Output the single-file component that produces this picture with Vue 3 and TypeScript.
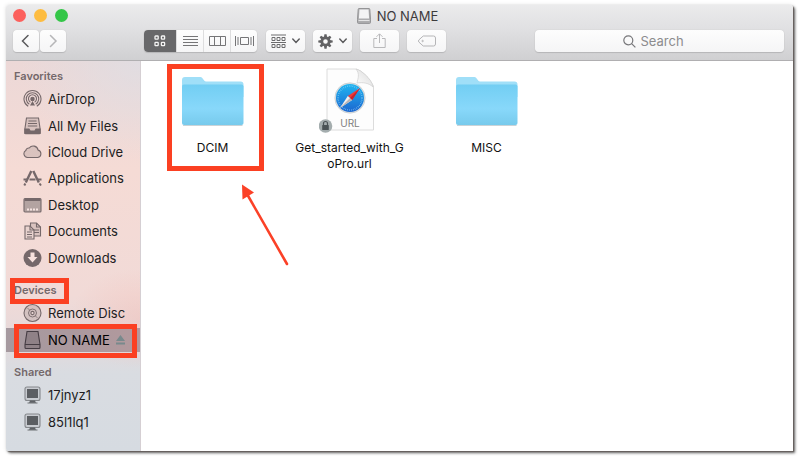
<script setup lang="ts">
import { ref } from 'vue'

interface Place { name: string; icon: string; ejectable?: boolean }
interface Section { title: string; marked?: boolean; places: Place[] }
interface FileItem { lines: string[]; kind: 'folder' | 'url'; marked?: boolean }

const sections: Section[] = [
  {
    title: 'Favorites',
    places: [
      { name: 'AirDrop', icon: 'airdrop' },
      { name: 'All My Files', icon: 'files' },
      { name: 'iCloud Drive', icon: 'cloud' },
      { name: 'Applications', icon: 'apps' },
      { name: 'Desktop', icon: 'desktop' },
      { name: 'Documents', icon: 'documents' },
      { name: 'Downloads', icon: 'downloads' },
    ],
  },
  {
    title: 'Devices',
    marked: true,
    places: [
      { name: 'Remote Disc', icon: 'disc' },
      { name: 'NO NAME', icon: 'drive', ejectable: true },
    ],
  },
  {
    title: 'Shared',
    places: [
      { name: '17jnyz1', icon: 'display' },
      { name: '85l1lq1', icon: 'display' },
    ],
  },
]

const files: FileItem[] = [
  { lines: ['DCIM'], kind: 'folder', marked: true },
  { lines: ['Get_started_with_G', 'oPro.url'], kind: 'url' },
  { lines: ['MISC'], kind: 'folder' },
]

const selected = ref('NO NAME')
const view = ref('icons')
const query = ref('')
const toothAngles = [0, 45, 90, 135, 180, 225, 270, 315]
</script>

<template>
  <div class="page">
    <main class="window">
      <header class="header">
        <div class="titlebar">
          <div class="lights">
            <button class="light red" aria-label="Close"></button>
            <button class="light yellow" aria-label="Minimize"></button>
            <button class="light green" aria-label="Zoom"></button>
          </div>
          <h1 class="title">
            <svg width="14" height="16" viewBox="0 0 14 16">
              <path d="M2 .5h10q.7 0 .8.8l.7 9.900v3.200a1 1 0 0 1-1 1h-11a1 1 0 0 1-1-1v-3.200l.7-9.900q.1-.8.8-.8z" fill="#adadaf" stroke="#949496" />
              <path d="M2.500 1.500h9l.6 9H1.900z" fill="#f4f4f5" />
              <path d="M1.500 12.500h11" stroke="#e4e4e5" />
            </svg>
            NO NAME
          </h1>
          <div></div>
        </div>
        <div class="toolbar">
          <div class="nav">
            <button class="btn" aria-label="Back">
              <svg width="10" height="14" viewBox="0 0 10 14"><path d="M7 1.500 1.500 7 7 12.500" class="line dark" /></svg>
            </button>
            <button class="btn" aria-label="Forward">
              <svg width="10" height="14" viewBox="0 0 10 14"><path d="M2.500 1.500 8 7l-5.500 5.500" class="line pale" /></svg>
            </button>
          </div>
          <div class="views">
            <button class="first" :class="{ on: view === 'icons' }" aria-label="Icons" @click="view = 'icons'">
              <svg width="12" height="12" viewBox="0 0 12 12" fill="none" stroke="currentColor" stroke-width="1.300">
                <rect x="1" y="1" width="3.200" height="3.200" rx=".6" /><rect x="7.400" y="1" width="3.200" height="3.200" rx=".6" />
                <rect x="1" y="7.400" width="3.200" height="3.200" rx=".6" /><rect x="7.400" y="7.400" width="3.200" height="3.200" rx=".6" />
              </svg>
            </button>
            <button :class="{ on: view === 'list' }" aria-label="List" @click="view = 'list'">
              <svg width="15" height="12" viewBox="0 0 15 12" stroke="currentColor"><path d="M0 1.500h15M0 4.500h15M0 7.500h15M0 10.500h15" /></svg>
            </button>
            <button :class="{ on: view === 'columns' }" aria-label="Columns" @click="view = 'columns'">
              <svg width="17" height="12" viewBox="0 0 17 12" fill="none" stroke="currentColor"><path d="M.5 1.500h16v9H.5zM5.500 1.500v9M11.500 1.500v9" /></svg>
            </button>
            <button :class="{ on: view === 'flow' }" aria-label="Cover Flow" @click="view = 'flow'">
              <svg width="19" height="12" viewBox="0 0 19 12" fill="none" stroke="currentColor"><path d="M5.500 2.500h8v7h-8zM.5 1v10M3 2v8M16 2v8M18.500 1v10" /></svg>
            </button>
          </div>
          <button class="btn wide" aria-label="Arrange">
            <svg width="15" height="15" viewBox="0 0 15 15" fill="none" stroke="#6c6c6e">
              <path d="M0 1h15M0 8.500h15" />
              <path d="M1 3.500h3v3H1zM6 3.500h3v3H6zM11 3.500h3v3h-3zM1 10.500h3v3H1zM6 10.500h3v3H6zM11 10.500h3v3h-3z" />
            </svg>
            <svg width="8" height="6" viewBox="0 0 8 6"><path d="M.8 1 4 4.400 7.200 1" class="line dark" /></svg>
          </button>
          <button class="btn wide" aria-label="Action">
            <svg width="15" height="15" viewBox="-7.500 -7.500 15 15" fill="#626264">
              <path v-for="a in toothAngles" :key="a" d="M-1.600-4-1.100-7.200h2.200L1.600-4z" :transform="`rotate(${a})`" />
              <circle r="3.700" fill="none" stroke="#626264" stroke-width="2.800" />
            </svg>
            <svg width="8" height="6" viewBox="0 0 8 6"><path d="M.8 1 4 4.400 7.200 1" class="line dark" /></svg>
          </button>
          <button class="btn wide" aria-label="Share">
            <svg width="13" height="16" viewBox="0 0 13 16" fill="none" stroke="#b9b9bb"><path d="M4 5.500H.8v9h11.400v-9H9M6.500 10V1M3.500 3.800l3-3 3 3" /></svg>
          </button>
          <button class="btn wide" aria-label="Tags">
            <svg width="18" height="12" viewBox="0 0 18 12" fill="none" stroke="#b5b5b7"><path d="M5.200 1h10.300a2 2 0 0 1 2 2v6a2 2 0 0 1-2 2H5.200L1 7.200a1.700 1.700 0 0 1 0-2.400z" /><circle cx="4.600" cy="6" r=".7" /></svg>
          </button>
          <label class="search">
            <svg width="13" height="13" viewBox="0 0 13 13" fill="none" stroke="#77777a" stroke-width="1.200"><circle cx="5.300" cy="5.300" r="4.500" /><path d="m8.600 8.600 3.800 3.800" /></svg>
            <input v-model="query" type="text" placeholder="Search" aria-label="Search" />
          </label>
        </div>
      </header>

      <div class="body">
        <nav class="sidebar">
          <section v-for="s in sections" :key="s.title">
            <h2><span>{{ s.title }}</span><i v-if="s.marked" class="mark heading-mark"></i></h2>
            <ul :class="{ long: s.places.length > 2 }">
              <li v-for="p in s.places" :key="p.name" :class="{ selected: selected === p.name }">
                <button class="place" @click="selected = p.name">
                  <svg width="19" height="20" viewBox="0 0 19 20" class="place-icon">
                    <g v-if="p.icon === 'airdrop'">
                      <path d="M5.200 17.300a8.500 8.500 0 1 1 8.600 0M6.300 15.200a6.200 6.200 0 1 1 6.400 0M7.400 13.200a4 4 0 1 1 4.200 0" />
                      <circle cx="9.500" cy="10" r="1.700" class="solid" /><path d="m9.500 12-2.500 4.500h5z" class="solid" stroke="none" />
                    </g>
                    <g v-else-if="p.icon === 'files'">
                      <path d="M3.500 2h12l1.700 11.500v3.200a1 1 0 0 1-1 1H2.800a1 1 0 0 1-1-1v-3.200z" class="soft" />
                      <path d="M5.500 5h8M5 7.500h9M4.800 10h9.400" />
                      <path d="M2 13h4l1.200 2h4.600l1.200-2h4v4.500H2z" class="solid" />
                    </g>
                    <path v-else-if="p.icon === 'cloud'" class="soft" d="M4.500 15.500A3.700 3.700 0 0 1 2.800 8.600 3 3 0 0 1 6.200 6a5 5 0 0 1 8.900 2.100 3.800 3.800 0 0 1-.3 7.400z" />
                    <g v-else-if="p.icon === 'apps'">
                      <path d="M8.300 3 2.800 14.500M10.300 3l5.500 11.500" stroke-width="2.400" />
                      <path d="M.5 11.500h4M6.500 11.500h6M15 11.500h3.500M2.300 15.500l-1 2M16.500 15.500l1.500 2" stroke-width="2" />
                    </g>
                    <g v-else-if="p.icon === 'desktop'">
                      <rect x="1" y="3.500" width="17" height="13.500" rx="1" fill="#b3a3a1" /><path d="M1.500 5h16" stroke-width="2" />
                      <path d="M4 14.500h11" stroke="#f6e4e1" stroke-width="2" stroke-dasharray="2 1" />
                    </g>
                    <g v-else-if="p.icon === 'documents'">
                      <path d="M7.500 2h6l4 4v9h-10z" class="soft" /><path d="M13.500 2v4h4M11 9h5M11 11.500h5" />
                      <path d="M2 5h5l4 4v9H2z" fill="#e8d2ce" /><path d="M7 5v4h4M4 11h5M4 13.500h5M4 16h5" />
                    </g>
                    <g v-else-if="p.icon === 'downloads'">
                      <circle cx="9.500" cy="10" r="9" class="solid" stroke="none" /><path d="M7.500 4.500h4V9h3l-5 5.500-5-5.500h3z" fill="#f7e2de" stroke="none" />
                    </g>
                    <g v-else-if="p.icon === 'disc'">
                      <circle cx="9.500" cy="10" r="8.500" class="soft" /><circle cx="9.500" cy="10" r="4" stroke-width=".9" /><circle cx="9.500" cy="10" r="1.600" fill="#f2dedc" /><path d="m4.500 5 2.300 2.300m5.400 5.400 2.300 2.300" stroke-width=".7" />
                    </g>
                    <g v-else-if="p.icon === 'drive'" class="black">
                      <path d="M4 1.500h11l2 13v3a1 1 0 0 1-1 1H3a1 1 0 0 1-1-1v-3zM2 14.500h15" fill="#8f8187" />
                    </g>
                    <g v-else>
                      <rect x="2" y="2" width="15" height="13.500" rx="2" fill="#c8cbd0" stroke="#85888c" />
                      <rect x="4" y="4" width="11" height="9" fill="#5b5e62" stroke="none" />
                      <path d="M7 15.500h5l1 2.500H6z" fill="#5f6266" stroke="none" /><path d="M4.500 18h10" stroke="#777a7e" />
                    </g>
                  </svg>
                  <span>{{ p.name }}</span>
                </button>
                <button v-if="p.ejectable" class="eject" aria-label="Eject">
                  <svg width="9" height="10" viewBox="0 0 9 10" fill="#78898c"><path d="M4.500 0 9 6H0zM0 7.500h9v2H0z" /></svg>
                </button>
                <i v-if="p.ejectable" class="mark place-mark"></i>
              </li>
            </ul>
          </section>
        </nav>

        <section class="files">
          <figure v-for="f in files" :key="f.lines[0]" class="file">
            <svg v-if="f.kind === 'folder'" width="62" height="66" viewBox="0 0 62 66">
              <defs>
                <linearGradient id="folder" x1="0" y1="0" x2="0" y2="1">
                  <stop offset="0" stop-color="#72cef3" /><stop offset=".6" stop-color="#88d8fa" /><stop offset="1" stop-color="#77caec" />
                </linearGradient>
              </defs>
              <path d="M0 13a3 3 0 0 1 3-3h15.500c2.500 0 3 4.500 5.500 4.500h34.500a3 3 0 0 1 3 3V30H0z" fill="#a0dff8" />
              <path d="M0 19.500Q0 17.500 2 17.500h57.500q2 0 2 2V56q0 2-2 2H2q-2 0-2-2z" fill="url(#folder)" />
              <path d="M1 58.500h59.500" stroke="#a6b5bd" stroke-opacity=".6" />
            </svg>
            <svg v-else width="62" height="66" viewBox="0 0 62 66">
              <defs>
                <linearGradient id="blue" x1="0" y1="0" x2="0" y2="1"><stop offset="0" stop-color="#20b5f0" /><stop offset="1" stop-color="#1b66d0" /></linearGradient>
                <linearGradient id="fold" x1="0" y1="1" x2="1" y2="0"><stop offset="0" stop-color="#fff" /><stop offset="1" stop-color="#d8d8d8" /></linearGradient>
              </defs>
              <path d="M8 2h29q5 1 10 6.500T54.500 19v44H8z" fill="#fdfdfd" stroke="#dcdcdc" />
              <path d="M37 2c4 5 2 9 1 14 6-1 12 0 16 4-1-5-4-9-7.500-12S40 2.500 37 2z" fill="url(#fold)" stroke="#d0d0d0" stroke-width=".7" />
              <circle cx="31" cy="31" r="15.200" fill="#dce1e4" stroke="#b6bec3" stroke-width=".5" />
              <circle cx="31" cy="31" r="14" fill="url(#blue)" />
              <circle cx="31" cy="31" r="12" fill="none" stroke="#9cd6f6" stroke-width="1.400" stroke-dasharray=".5 1.400" />
              <path d="M41 21 28.800 29l4.400 4z" fill="#f03a3a" /><path d="M21 41l7.800-12 4.400 4z" fill="#f1efee" /><path d="M21 41 31 31l2.200 2z" fill="#b9b4b4" /><path d="M41 21 31 31l2.200 2z" fill="#c8242c" />
              <text x="31" y="60" text-anchor="middle" class="url">URL</text>
              <circle cx="6.500" cy="59" r="6.800" fill="#a4adae" />
              <rect x="3.200" y="58" width="6.600" height="5" rx=".6" fill="#4a5356" /><path d="M4.500 58v-1.500a2 2 0 0 1 4 0V58" fill="none" stroke="#4a5356" stroke-width="1.200" />
            </svg>
            <figcaption><span v-for="l in f.lines" :key="l">{{ l }}</span></figcaption>
            <i v-if="f.marked" class="mark file-mark"></i>
            <svg v-if="f.marked" class="arrow" width="52" height="88" viewBox="0 0 52 88">
              <path d="M7 12 47 82" stroke="#fb4127" stroke-width="2.600" stroke-linecap="round" />
              <path d="M2 2.500 14 10.500 2.500 17.500z" fill="#fb4127" />
            </svg>
          </figure>
        </section>
      </div>
    </main>
  </div>
</template>

<style>
body { margin: 0; background: #fff; }
</style>

<style scoped>
* { box-sizing: border-box; }
button { font: inherit; border: 0; padding: 0; background: none; color: inherit; }
svg { flex: none; }
.page {
  min-height: 100vh;
  display: flex;
  padding: 5px 7px 7px 6px;
  font-family: Inter, Roboto, sans-serif;
  color: #211d1e;
}
.window {
  flex: 1;
  min-width: 0;
  display: flex;
  flex-direction: column;
  border-radius: 3px 3px 0 3px;
  background: #fff;
  box-shadow: 1px 1px 1px #66605e, 2px 2px 3px rgba(0, 0, 0, 0.6), 0 0 4px rgba(0, 0, 0, 0.12);
}
.header {
  padding: 0 9px 8px 7px;
  border-bottom: 1px solid #b0afb1;
  border-radius: 3px 3px 0 0;
  background: linear-gradient(#ebebec, #e1e1e3 40%, #d0d0d2);
}
.titlebar { display: grid; grid-template-columns: 1fr auto 1fr; align-items: center; height: 21px; padding-right: 2px; }
.lights { display: flex; gap: 8px; }
.light { width: 13px; height: 13px; border-radius: 50%; }
.red { background: #fc605c; }
.yellow { background: #fdbc40; }
.green { background: #34c648; }
.title { display: flex; align-items: center; gap: 6px; margin: 0; font-size: 13px; font-weight: 400; color: #3d3b3d; }
.toolbar { display: flex; align-items: center; gap: 8px; margin-top: 4px; }
.nav { display: flex; gap: 1px; margin-right: 70px; }
.btn, .views, .search {
  display: flex;
  align-items: center;
  justify-content: center;
  height: 22px;
  border-radius: 4px;
  background: linear-gradient(#fdfdfd, #f5f5f6);
  box-shadow: 0 0 1px #bbb, 0 1px 1px #b6b6b8;
}
.btn { width: 26px; }
.btn.wide { width: 39px; gap: 6px; }
.line { fill: none; stroke-width: 1.5; stroke-linecap: round; }
.dark { stroke: #5a5a5c; }
.pale { stroke: #b6b6b8; }
.views { overflow: hidden; margin-right: 1px; }
.views button { display: flex; align-items: center; justify-content: center; width: 27px; height: 22px; color: #757577; border-left: 1px solid #ddddde; }
.views .first { width: 32px; border: 0; }
.views .on { background: #68686a; color: #f4f4f4; }
.search { flex: 1; margin-left: 81px; gap: 5px; }
.search input { width: 56px; padding: 0; border: 0; outline: 0; background: none; font: 13px Inter, Roboto, sans-serif; color: #444; }
.search input::placeholder { color: #8c8c8e; opacity: 1; }
.body { flex: 1; display: flex; }
.sidebar {
  flex: none;
  width: 135px;
  padding: 5px 0 16px;
  border-right: 1px solid #d5cfd3;
  border-radius: 0 0 0 3px;
  background:
    radial-gradient(70px 50px at 100% 66%, rgba(244, 180, 170, 0.35), transparent),
    radial-gradient(120px 100px at 100% 0, rgba(222, 222, 228, 0.8), transparent),
    linear-gradient(#ecd8d7, #f5dbd5 28%, #f1dad7 60%, #e6d9da 70%, #d9dce1 80%, #d6dbe1);
}
section + section { margin-top: 9px; }
h2 { position: relative; display: flex; align-items: center; height: 20px; margin: 0; padding-left: 8px; font-size: 11px; font-weight: 600; color: #74686a; }
ul { display: grid; grid-auto-rows: 1fr; height: 53px; margin: 0; padding: 0; list-style: none; }
ul.long { height: 185px; }
li { position: relative; display: flex; align-items: center; gap: 6px; padding-left: 17px; font-size: 13px; }
.place { display: flex; align-items: center; gap: 6px; white-space: nowrap; }
.selected { background: linear-gradient(90deg, #a5999f, #b2999d) center / 100% 24px no-repeat; color: #000; }
.place-icon { fill: none; stroke: #75686a; stroke-width: 1.1; }
.place-icon .solid { fill: #75686a; }
.place-icon .soft { fill: rgba(116, 100, 102, 0.2); }
.place-icon .black { stroke: #453c43; }
.eject { display: flex; }
.mark { position: absolute; border: 5px solid #fb4022; pointer-events: none; }
.heading-mark { left: 4px; top: -2px; width: 59px; height: 26px; }
.place-mark { left: 8px; top: -3px; width: 123px; height: 34px; }
.files { flex: 1; min-width: 0; display: flex; flex-wrap: wrap; align-content: flex-start; margin: 0; padding: 6px 3px; }
.file { position: relative; display: flex; flex-direction: column; align-items: center; width: 137px; margin: 0; }
figcaption { display: flex; flex-direction: column; align-items: center; margin-top: 7px; font-size: 12px; line-height: 16px; color: #111; }
.url { font: 400 10px Inter, sans-serif; fill: #808080; }
.file-mark { left: 23px; top: -3px; width: 97px; height: 107px; }
.arrow { position: absolute; left: 96px; top: 115px; pointer-events: none; }
</style>
